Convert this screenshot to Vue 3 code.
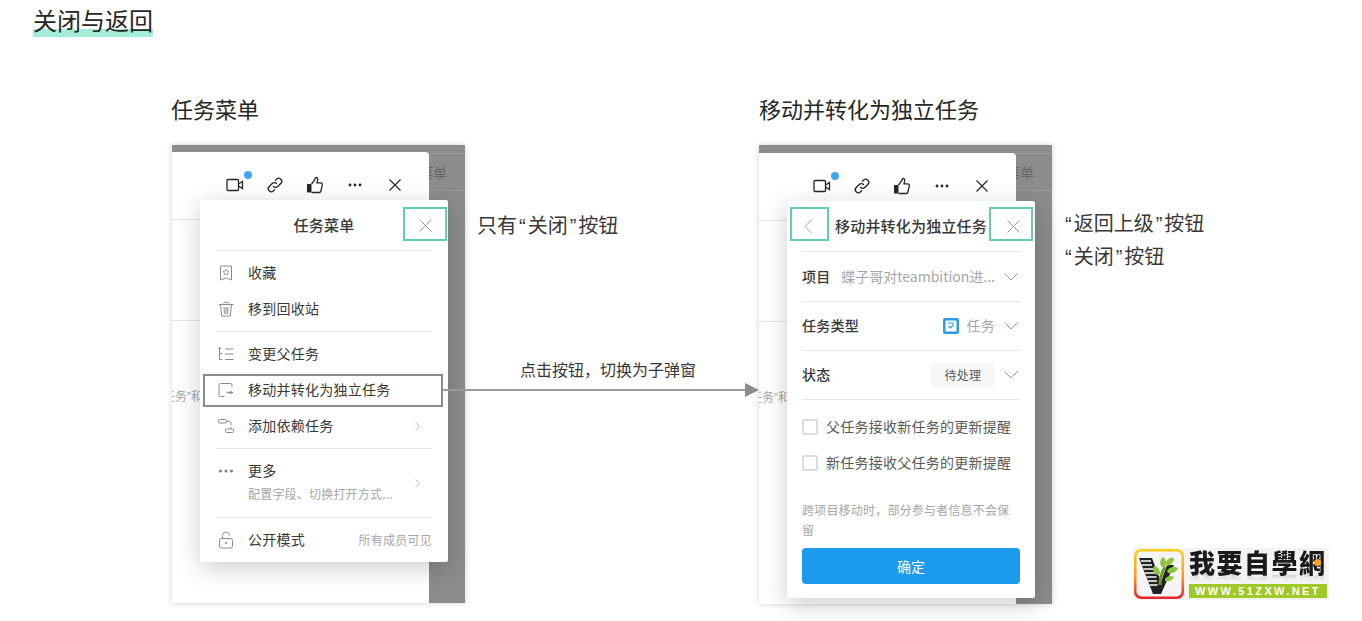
<script setup>
const checks = ['父任务接收新任务的更新提醒', '新任务接收父任务的更新提醒']
const toolbarGap = 40
</script>

<template>
  <div class="page">
    <div class="heading">关闭与返回</div>

    <div class="board">
      <section>
        <h2 class="sub-title">任务菜单</h2>
        <div class="stage">
          <div class="frame frame-left">
            <div class="behind"><span>菜单</span></div>
            <div class="panel">
              <div class="toolbar" :style="{ '--cell': toolbarGap + 'px' }">
                <span class="tool">
                  <svg width="18" height="14" viewBox="0 0 18 14" fill="none" stroke="#262626" stroke-width="1.3"><rect x="1" y="1.500" width="11.500" height="11" rx="1"/><path d="M12.500 6l4-2.500v7l-4-2.500"/></svg>
                  <i class="dot"></i>
                </span>
                <span class="tool">
                  <svg width="18" height="18" viewBox="0 0 18 18" fill="none" stroke="#262626" stroke-width="1.3" stroke-linecap="round"><path d="M7.500 10.500a3 3 0 0 0 4.300 0l3-3a3 3 0 0 0-4.300-4.300L9.300 4.400"/><path d="M10.500 7.500a3 3 0 0 0-4.300 0l-3 3a3 3 0 0 0 4.300 4.300l1.200-1.200"/></svg>
                </span>
                <span class="tool">
                  <svg width="18" height="18" viewBox="0 0 18 18"><rect x="1" y="8" width="4.500" height="8.500" rx=".8" fill="#262626"/><path d="M5.500 8.200L8.700 3.700c.2-1.200.6-2.200 1.500-2.200 1.300 0 1.700 1.300 1.400 2.700L11 6.800h3.700c1.200 0 1.900 1 1.600 2.100l-1.400 6.100c-.2.900-.9 1.500-1.800 1.500H5.500" fill="none" stroke="#262626" stroke-width="1.300"/></svg>
                </span>
                <span class="tool">
                  <svg width="14" height="4" viewBox="0 0 14 4" fill="#262626"><circle cx="2" cy="2" r="1.400"/><circle cx="7" cy="2" r="1.400"/><circle cx="12" cy="2" r="1.400"/></svg>
                </span>
                <span class="tool">
                  <svg width="12" height="12" viewBox="0 0 12 12" stroke="#262626" stroke-width="1.200"><path d="M.5.500l11 11M11.500.500l-11 11"/></svg>
                </span>
              </div>
              <div class="panel-block"></div>
              <div class="panel-text">任务<span class="q">”</span>和</div>
            </div>

            <div class="popup popup-menu">
              <div class="pop-head">
                <span class="pop-title">任务菜单</span>
                <span class="pop-close">
                  <svg width="13" height="13" viewBox="0 0 13 13" stroke="#9a9a9a" stroke-width="1"><path d="M.5.500l12 12M12.500.500l-12 12"/></svg>
                </span>
                <i class="mark mark-close"></i>
              </div>

              <div class="menu-group">
                <div class="menu-item">
                  <svg class="mi" width="16" height="16" viewBox="0 0 16 16" fill="none" stroke="#8c8c8c"><path d="M2.500 1h11v14l-5.500-2-5.500 2z"/><path d="M8 4.200l1 2 2.100.2-1.600 1.400.5 2.100-2-1.100-2 1.100.5-2.100-1.600-1.400 2.100-.2z" stroke-width=".8"/></svg>
                  <span>收藏</span>
                </div>
                <div class="menu-item">
                  <svg class="mi" width="16" height="16" viewBox="0 0 16 16" fill="none" stroke="#8c8c8c"><path d="M.5 3.500h15M5.500 3.500c0-1.500 1-2.500 2.500-2.500s2.500 1 2.500 2.500M2.500 3.500l1.200 11.500h8.600l1.200-11.500M6 6l.4 7M10 6l-.4 7M8 6v7"/></svg>
                  <span>移到回收站</span>
                </div>
              </div>

              <div class="menu-group group-mid">
                <div class="menu-item">
                  <svg class="mi" width="16" height="16" viewBox="0 0 16 16" fill="none" stroke="#8c8c8c"><path d="M1.500 1v12.500h3M1.500 7.500h3M7 3h8.500M7 8h8.500M7 13.500h8.500M.5 2.500h2.500"/></svg>
                  <span>变更父任务</span>
                </div>
                <div class="menu-item is-picked">
                  <svg class="mi" width="16" height="16" viewBox="0 0 16 16" fill="none" stroke="#8c8c8c"><path d="M14 5V3a1.500 1.500 0 0 0-1.500-1.500h-10A1.500 1.500 0 0 0 1 3v10a1.500 1.500 0 0 0 1.500 1.500h4"/><path d="M8.500 10.500H13" stroke-width="1.500"/><path d="M12.500 8.500l3 2-3 2z" fill="#8c8c8c" stroke="none"/></svg>
                  <span>移动并转化为独立任务</span>
                </div>
                <div class="menu-item">
                  <svg class="mi" width="16" height="16" viewBox="0 0 16 16" fill="none" stroke="#8c8c8c"><rect x=".5" y="1.500" width="8" height="3.500" rx="1"/><rect x="7.500" y="11" width="8" height="3.500" rx="1"/><path d="M8.500 3.300h3a1.500 1.500 0 0 1 1.500 1.500V7M13 9v2"/></svg>
                  <span>添加依赖任务</span>
                  <svg class="chev" width="5" height="9" viewBox="0 0 5 9" fill="none" stroke="#c4c4c4"><path d="M.5.500l4 4-4 4"/></svg>
                </div>
              </div>

              <div class="menu-group group-more">
                <div class="menu-item item-more">
                  <svg class="mi more-dots" width="16" height="4" viewBox="0 0 16 4" fill="#808080"><circle cx="2.500" cy="2" r="1.500"/><circle cx="8" cy="2" r="1.500"/><circle cx="13.500" cy="2" r="1.500"/></svg>
                  <div class="more-text">
                    <div>更多</div>
                    <div class="more-sub">配置字段、切换打开方式...</div>
                  </div>
                  <svg class="chev" width="5" height="9" viewBox="0 0 5 9" fill="none" stroke="#c4c4c4"><path d="M.5.500l4 4-4 4"/></svg>
                </div>
              </div>

              <div class="menu-foot">
                <svg class="mi" width="16" height="18" viewBox="0 0 16 18" fill="none" stroke="#8c8c8c"><rect x="1.500" y="7.500" width="13" height="9.500" rx="2"/><path d="M4.500 7.500V4.500a3.500 3.500 0 0 1 7 0"/><circle cx="8" cy="12" r="1" fill="#8c8c8c" stroke="none"/></svg>
                <span>公开模式</span>
                <span class="foot-note">所有成员可见</span>
              </div>
            </div>
          </div>
          <p class="note note-left">只有<span class="q">“</span>关闭<span class="q">”</span>按钮</p>
        </div>
      </section>

      <section>
        <h2 class="sub-title">移动并转化为独立任务</h2>
        <div class="stage">
          <div class="frame frame-right">
            <div class="behind"><span>菜单</span></div>
            <div class="panel">
              <div class="toolbar" :style="{ '--cell': toolbarGap + 'px' }">
                <span class="tool">
                  <svg width="18" height="14" viewBox="0 0 18 14" fill="none" stroke="#262626" stroke-width="1.3"><rect x="1" y="1.500" width="11.500" height="11" rx="1"/><path d="M12.500 6l4-2.500v7l-4-2.500"/></svg>
                  <i class="dot"></i>
                </span>
                <span class="tool">
                  <svg width="18" height="18" viewBox="0 0 18 18" fill="none" stroke="#262626" stroke-width="1.3" stroke-linecap="round"><path d="M7.500 10.500a3 3 0 0 0 4.300 0l3-3a3 3 0 0 0-4.300-4.300L9.300 4.400"/><path d="M10.500 7.500a3 3 0 0 0-4.300 0l-3 3a3 3 0 0 0 4.300 4.300l1.200-1.200"/></svg>
                </span>
                <span class="tool">
                  <svg width="18" height="18" viewBox="0 0 18 18"><rect x="1" y="8" width="4.500" height="8.500" rx=".8" fill="#262626"/><path d="M5.500 8.200L8.700 3.700c.2-1.200.6-2.200 1.500-2.200 1.300 0 1.700 1.300 1.400 2.700L11 6.800h3.700c1.200 0 1.900 1 1.600 2.100l-1.400 6.100c-.2.900-.9 1.500-1.800 1.500H5.500" fill="none" stroke="#262626" stroke-width="1.300"/></svg>
                </span>
                <span class="tool">
                  <svg width="14" height="4" viewBox="0 0 14 4" fill="#262626"><circle cx="2" cy="2" r="1.400"/><circle cx="7" cy="2" r="1.400"/><circle cx="12" cy="2" r="1.400"/></svg>
                </span>
                <span class="tool">
                  <svg width="12" height="12" viewBox="0 0 12 12" stroke="#262626" stroke-width="1.200"><path d="M.5.500l11 11M11.500.500l-11 11"/></svg>
                </span>
              </div>
              <div class="panel-block"></div>
              <div class="panel-text">任务<span class="q">”</span>和</div>
            </div>

            <div class="popup popup-move">
              <div class="pop-head head-move">
                <span class="pop-back">
                  <svg width="9" height="15" viewBox="0 0 9 15" fill="none" stroke="#9a9a9a"><path d="M8 .500l-7 7 7 7"/></svg>
                </span>
                <i class="mark mark-back"></i>
                <span class="pop-title">移动并转化为独立任务</span>
                <span class="pop-close">
                  <svg width="13" height="13" viewBox="0 0 13 13" stroke="#9a9a9a" stroke-width="1"><path d="M.5.500l12 12M12.500.500l-12 12"/></svg>
                </span>
                <i class="mark mark-close"></i>
              </div>

              <div class="form">
                <div class="form-row">
                  <span class="form-label">项目</span>
                  <span class="form-value value-project">蝶子哥对teambition进...</span>
                  <svg class="down" width="14" height="8" viewBox="0 0 14 8" fill="none" stroke="#9a9a9a"><path d="M.5.500L7 7l6.500-6.500"/></svg>
                </div>
                <div class="form-row">
                  <span class="form-label">任务类型</span>
                  <span class="type-wrap">
                    <svg width="16" height="16" viewBox="0 0 16 16"><rect width="16" height="16" rx="2" fill="#2b9cea"/><rect x="2.500" y="2.500" width="11" height="11" rx=".5" fill="#fff"/><path d="M5 5h6" stroke="#2b9cea"/><path d="M5.500 7.800L7.500 9.800l3-3.300" fill="none" stroke="#2b9cea" stroke-width="1.200"/></svg>
                    <span class="form-value">任务</span>
                  </span>
                  <svg class="down" width="14" height="8" viewBox="0 0 14 8" fill="none" stroke="#9a9a9a"><path d="M.5.500L7 7l6.500-6.500"/></svg>
                </div>
                <div class="form-row">
                  <span class="form-label">状态</span>
                  <span class="status">待处理</span>
                  <svg class="down" width="14" height="8" viewBox="0 0 14 8" fill="none" stroke="#9a9a9a"><path d="M.5.500L7 7l6.500-6.500"/></svg>
                </div>

                <div class="checks">
                  <label v-for="c in checks" :key="c" class="check">
                    <i class="box"></i>
                    <span>{{ c }}</span>
                  </label>
                </div>

                <p class="hint">跨项目移动时，部分参与者信息不会保留</p>
                <button class="confirm">确定</button>
              </div>
            </div>
          </div>
          <p class="note note-right"><span class="q">“</span>返回上级<span class="q">”</span>按钮<br><span class="q">“</span>关闭<span class="q">”</span>按钮</p>
        </div>
      </section>
    </div>

    <div class="jump">
      <div class="jump-label">点击按钮，切换为子弹窗</div>
      <div class="jump-line"></div>
    </div>

    <div class="logo">
      <svg class="logo-mark" width="52" height="52" viewBox="0 0 52 52">
        <defs>
          <linearGradient id="rim" x1="0" y1="0" x2="0" y2="1">
            <stop offset="0" stop-color="#ffd21f"/>
            <stop offset=".55" stop-color="#ff9a1a"/>
            <stop offset="1" stop-color="#e8202a"/>
          </linearGradient>
        </defs>
        <rect x="1" y="1" width="50" height="50" rx="7" fill="url(#rim)"/>
        <rect x="3.500" y="3.500" width="45" height="45" rx="5" fill="#f4f4f4"/>
        <path d="M6 10h13l9 24 6-17h7L28 46h-8z" fill="#222"/>
        <path d="M8 13h10M9 17h10M10.500 21h10M12 25h10M13.500 29h10M15 33h9M16.500 37h8" stroke="#fff" stroke-width="1.300"/>
        <path d="M27 37c0-8 2-13 5-18" stroke="#6f9a1f" stroke-width="3" fill="none"/>
        <path d="M24 27c-4-2-5-6-3-9 4 0 6 4 6 8zM29 19c-3-3-2-8 1-10 3 2 4 6 2 10zM33 16c0-4 4-7 8-6 0 4-3 7-7 8zM34 23c2-4 7-5 11-3-1 4-6 6-10 5zM32 31c2-3 6-4 9-2-1 3-5 5-9 4z" fill="#8cc63f"/>
      </svg>
      <div class="logo-body">
        <div class="logo-cn"><span class="logo-word">我要自學網</span><i class="logo-spot"></i></div>
        <div class="logo-en">WWW.51ZXW.NET</div>
      </div>
    </div>
  </div>
</template>

<style>
html, body {
  margin: 0;
  background: #fff;
}
</style>

<style scoped>
.page {
  position: relative;
  width: 1362px;
  height: 621px;
  padding-top: 6px;
  box-sizing: border-box;
  overflow: hidden;
  background: #fff;
  color: #262626;
  font-family: "Noto Sans CJK SC", "Noto Sans", sans-serif;
}

.q {
  font-family: "Liberation Sans", sans-serif;
}

.note .q {
  padding: 0 2px;
}

.heading {
  display: inline-block;
  margin-left: 33px;
  padding-bottom: 4px;
  font-size: 24px;
  line-height: 27px;
  vertical-align: top;
  background: linear-gradient(transparent 23px, #a5ecd9 23px);
}

.board {
  display: grid;
  grid-template-columns: 588px 1fr;
  margin: 58px 0 0 171px;
}

.sub-title {
  margin: 0 0 24px;
  font-size: 22px;
  font-weight: 400;
  line-height: 26px;
}

.stage {
  display: flex;
}

.frame {
  position: relative;
  flex: none;
  width: 293px;
  height: 459px;
  background: #8c8c8c;
  box-shadow: 0 0 6px rgba(0, 0, 0, .18);
}

.frame-left {
  height: 458px;
  margin-left: 1px;
}

.behind {
  height: 38px;
  padding-top: 7px;
  border-bottom: 1px solid #9a9a9a;
  box-shadow: inset 0 8px 0 #8c8c8c, inset 0 9px 0 #9a9a9a;
  font-size: 14px;
  line-height: 41px;
  text-align: right;
  color: #666;
}

.behind span {
  padding-right: 18px;
}

.panel {
  position: absolute;
  left: 0;
  top: 7px;
  bottom: 0;
  width: 257px;
  border-radius: 0 4px 0 0;
  background: #fff;
  overflow: hidden;
}

.frame-right .panel {
  top: 8px;
}

.toolbar {
  display: flex;
  justify-content: flex-end;
  align-items: center;
  height: 65px;
  padding: 0 14px 2px 0;
  border-bottom: 1px solid #e6e6e6;
}

.tool {
  position: relative;
  display: flex;
  justify-content: center;
  align-items: center;
  width: var(--cell);
}

.dot {
  position: absolute;
  left: 29px;
  top: -7px;
  width: 8px;
  height: 8px;
  border-radius: 50%;
  background: #3da8f5;
}

.panel-block {
  height: 100px;
  border-bottom: 1px solid #e6e6e6;
}

.panel-text {
  margin: 66px 0 0 -9px;
  font-size: 12px;
  line-height: 18px;
  white-space: nowrap;
  color: #a6a6a6;
}

.popup {
  position: absolute;
  width: 248px;
  border-radius: 2px;
  background: #fff;
  box-shadow: 0 6px 24px rgba(0, 0, 0, .2);
  letter-spacing: .25px;
}

.popup-menu {
  left: 28px;
  top: 55px;
}

.popup-move {
  left: 28px;
  top: 56px;
}

.pop-head {
  position: relative;
  display: flex;
  justify-content: center;
  align-items: center;
  height: 50px;
  margin: 0 16px;
  border-bottom: 1px solid #e8e8e8;
}

.pop-title {
  font-size: 15px;
  font-weight: 500;
  line-height: 20px;
  color: #383838;
  white-space: nowrap;
}

.pop-close {
  position: absolute;
  right: 0;
  top: 19px;
  display: flex;
}

.pop-back {
  position: absolute;
  left: 2px;
  top: 18px;
  display: flex;
}

.head-move {
  margin: 0 15px;
}

.head-move .pop-title {
  letter-spacing: .2px;
}

.mark {
  position: absolute;
  box-sizing: border-box;
  height: 34px;
  border: 2px solid #63cdb5;
}

.mark-close {
  top: 7px;
  right: -15px;
  width: 44px;
}

.head-move .mark-close {
  top: 6px;
  right: -13px;
}

.mark-back {
  top: 6px;
  left: -12px;
  width: 39px;
}

.menu-group {
  margin: 0 16px;
  padding: 4px 0;
  border-bottom: 1px solid #e8e8e8;
}

.group-more {
  padding: 0;
}

.menu-item {
  position: relative;
  display: flex;
  align-items: center;
  height: 36px;
  padding-left: 2px;
  font-size: 14px;
  color: #383838;
}

.menu-item > span,
.menu-foot > span,
.more-text,
.form-label,
.form-value,
.check > span {
  padding-bottom: 2px;
}

.mi {
  flex: none;
  margin-right: 14px;
}

.more-dots {
  align-self: flex-start;
  margin-top: 20px;
}

.chev {
  margin-left: auto;
  margin-right: 12px;
}

.is-picked::after {
  content: "";
  position: absolute;
  left: -13px;
  right: -11px;
  top: 2px;
  bottom: 1px;
  border: 2px solid #8c8c8c;
}

.item-more {
  height: 68px;
}

.more-text {
  line-height: 24px;
}

.more-sub {
  font-size: 12px;
  letter-spacing: .2px;
  color: #a6a6a6;
}

.menu-foot {
  display: flex;
  align-items: center;
  height: 44px;
  margin: 0 16px;
  padding-left: 2px;
  font-size: 14px;
  color: #383838;
}

.foot-note {
  margin-left: auto;
  font-size: 12px;
  color: #a6a6a6;
}

.form {
  padding: 1px 15px 14px;
}

.form-row {
  display: flex;
  align-items: center;
  box-sizing: border-box;
  height: 49px;
  border-bottom: 1px solid #e8e8e8;
  font-size: 14px;
}

.form-label {
  font-weight: 500;
  color: #383838;
  margin-right: auto;
}

.form-value {
  color: #a6a6a6;
}

.value-project {
  white-space: nowrap;
  letter-spacing: 0;
}

.type-wrap {
  display: flex;
  align-items: center;
  gap: 8px;
}

.down {
  flex: none;
  margin: 0 2px 0 9px;
}

.status {
  box-sizing: border-box;
  width: 64px;
  height: 24px;
  border-radius: 4px;
  background: #f7f7f7;
  font-size: 12px;
  line-height: 23px;
  text-align: center;
  color: #595959;
}

.checks {
  margin-top: 9px;
}

.check {
  display: flex;
  align-items: center;
  gap: 8px;
  height: 36px;
  font-size: 14px;
  color: #595959;
}

.box {
  box-sizing: border-box;
  width: 16px;
  height: 16px;
  border: 2px solid #dcdcdc;
  border-radius: 2px;
}

.hint {
  margin: 19px 0 8px;
  font-size: 12px;
  line-height: 20px;
  letter-spacing: .2px;
  color: #a6a6a6;
}

.confirm {
  display: block;
  width: 100%;
  height: 36px;
  border: 0;
  border-radius: 4px;
  background: #1b9aee;
  font: inherit;
  font-size: 14px;
  color: #fff;
}

.note {
  margin: 0;
  font-size: 20px;
  color: #383838;
}

.note-left {
  margin: 65px 0 0 12px;
  line-height: 30px;
}

.note-right {
  margin: 62px 0 0 11px;
  line-height: 32px;
}

.jump {
  position: absolute;
  left: 443px;
  top: 358px;
  width: 316px;
}

.jump-label {
  padding-left: 77px;
  font-size: 16px;
  line-height: 22px;
  color: #383838;
}

.jump-line {
  position: relative;
  height: 2px;
  margin: 9px 13px 0 0;
  background: #9a9a9a;
}

.jump-line::after {
  content: "";
  position: absolute;
  right: -13px;
  top: -6px;
  border-left: 14px solid #8c8c8c;
  border-top: 7px solid transparent;
  border-bottom: 7px solid transparent;
}

.logo {
  position: absolute;
  left: 1133px;
  top: 548px;
  display: flex;
  gap: 4px;
  width: 196px;
  height: 52px;
  background: #f3f3f3;
}

.logo-mark {
  flex: none;
}

.logo-body {
  width: 138px;
}

.logo-cn {
  position: relative;
  height: 36px;
  font-family: "Noto Sans CJK TC", sans-serif;
  font-size: 26px;
  font-weight: 900;
  line-height: 27px;
  letter-spacing: 1.5px;
  white-space: nowrap;
  color: #1a1a1a;
}

.logo-word {
  display: block;
  -webkit-box-reflect: below -4px linear-gradient(transparent 62%, rgba(0, 0, 0, .22));
}

.logo-spot {
  position: absolute;
  right: 6px;
  top: 11px;
  width: 7px;
  height: 7px;
  border-radius: 50%;
  background: #f5a623;
}

.logo-en {
  position: relative;
  height: 14px;
  background: #9fc927;
  font-family: "Liberation Sans", sans-serif;
  font-size: 11px;
  font-weight: 700;
  line-height: 14px;
  letter-spacing: 2.4px;
  text-align: center;
  white-space: nowrap;
  color: #fff;
}
</style>
